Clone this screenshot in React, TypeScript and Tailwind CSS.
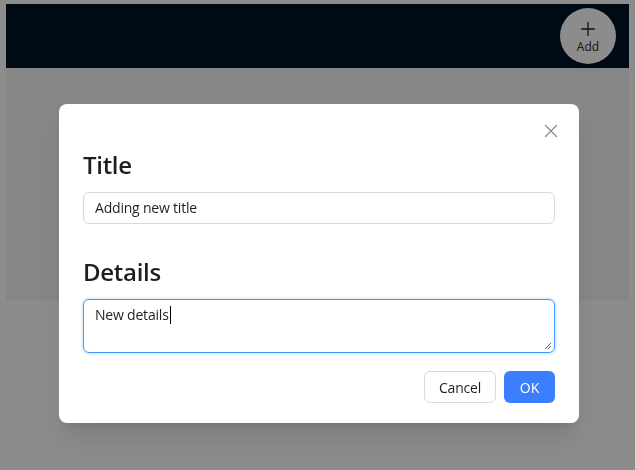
import {FC} from 'react';
import {X, Plus} from 'lucide-react';

const font = {fontFamily: '"Open Sans", "Noto Sans", sans-serif'};

const AddButton: FC = () => (
  <button className="flex h-[56px] w-[56px] flex-col items-center justify-center rounded-full bg-white text-[#1f1f1f] shadow-md">
    <Plus size={22} strokeWidth={1.4} className="mt-[1px]" />
    <span className="-mt-[2px] text-[12px] leading-[18px]">Add</span>
  </button>
);

const EditModal: FC = () => (
  <div className="absolute left-[59px] top-[104px] z-20 w-[520px] rounded-lg bg-white px-6 pb-5 pt-[45px] shadow-xl">
    <button className="absolute right-[17px] top-[16px] text-[#8c8c8c]">
      <X size={22} strokeWidth={1.4} />
    </button>

    <h3 className="text-[24px] font-semibold leading-8 tracking-[-0.3px] text-[#1f1f1f]">Title</h3>
    <div className="mt-[11px] h-8 rounded-md border border-[#d9d9d9] px-[11px] text-[14px] leading-[30px] tracking-[-0.2px] text-[#1f1f1f]">
      Adding new title
    </div>

    <h3 className="mt-8 text-[24px] font-semibold leading-8 tracking-[-0.3px] text-[#1f1f1f]">Details</h3>
    <div className="relative mt-[11px] h-[54px] rounded-md border border-[#4096ff] px-[11px] py-[4px] text-[14px] leading-[22px] tracking-[-0.2px] text-[#1f1f1f] shadow-[0_0_0_2px_rgba(5,145,255,0.1)]">
      New details
      <span className="ml-[1px] inline-block h-[18px] w-px bg-black align-[-4px]" />
      <svg width="8" height="8" viewBox="0 0 8 8" className="absolute bottom-[2px] right-[2px]">
        <path d="M7 1L1 7M7 4L4 7" stroke="#666" strokeWidth="1" />
      </svg>
    </div>

    <div className="mt-[18px] flex justify-end gap-2">
      <button className="h-8 w-[72px] rounded-md border border-[#d9d9d9] bg-white text-[14px] tracking-[-0.2px] text-[#1f1f1f]">
        Cancel
      </button>
      <button className="h-8 w-[51px] rounded-md bg-[#3d7dff] text-[14px] text-white">
        OK
      </button>
    </div>
  </div>
);

const App: FC = () => {
  return (
    <div className="relative min-h-screen bg-white pt-[4px]" style={font}>
      <div className="mx-[6px] h-[297px] bg-[#f5f5f5]">
        <header className="flex h-16 items-center justify-end bg-[#001529] pr-[13px]">
          <AddButton />
        </header>
      </div>

      <div className="fixed inset-0 z-10 bg-black/45" />
      <EditModal />
    </div>
  );
};

export default App;
